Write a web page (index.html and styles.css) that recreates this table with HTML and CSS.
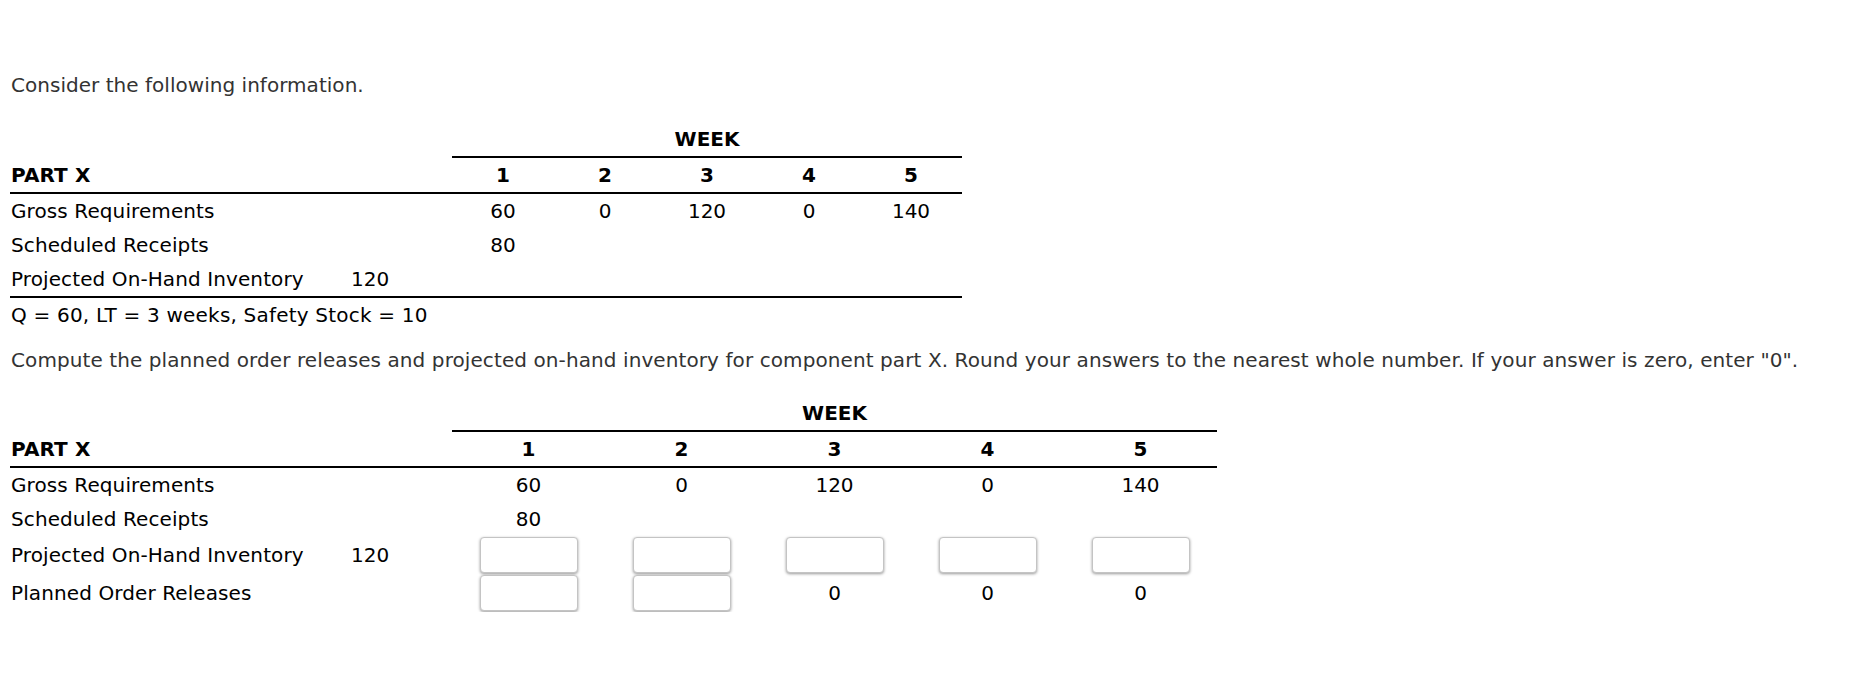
FILE: index.html
```html
<!DOCTYPE html>
<html>
<head>
<meta charset="utf-8">
<link rel="stylesheet" href="styles.css">
</head>
<body>
<div class="page">
  <p class="text intro">Consider the following information.</p>

  <table class="mrp mrp-small">
    <colgroup><col class="c-label"><col class="c-init"><col class="c-wk"><col class="c-wk"><col class="c-wk"><col class="c-wk"><col class="c-wk"></colgroup>
    <tr class="r-week"><td></td><td></td><td colspan="5" class="week">WEEK</td></tr>
    <tr class="r-head"><td class="lbl b">PART X</td><td></td><td class="b num">1</td><td class="b num">2</td><td class="b num">3</td><td class="b num">4</td><td class="b num">5</td></tr>
    <tr class="r-body"><td class="lbl">Gross Requirements</td><td></td><td class="num">60</td><td class="num">0</td><td class="num">120</td><td class="num">0</td><td class="num">140</td></tr>
    <tr class="r-body"><td class="lbl">Scheduled Receipts</td><td></td><td class="num">80</td><td></td><td></td><td></td><td></td></tr>
    <tr class="r-body r-last"><td class="lbl">Projected On-Hand Inventory</td><td class="init">120</td><td></td><td></td><td></td><td></td><td></td></tr>
    <tr class="r-body"><td class="lbl note" colspan="7">Q = 60, LT = 3 weeks, Safety Stock = 10</td></tr>
  </table>

  <p class="text compute">Compute the planned order releases and projected on-hand inventory for component part X. Round your answers to the nearest whole number. If your answer is zero, enter "0".</p>

  <table class="mrp mrp-large">
    <colgroup><col class="c-label"><col class="c-init"><col class="c-wk2"><col class="c-wk2"><col class="c-wk2"><col class="c-wk2"><col class="c-wk2"></colgroup>
    <tr class="r-week"><td></td><td></td><td colspan="5" class="week">WEEK</td></tr>
    <tr class="r-head"><td class="lbl b">PART X</td><td></td><td class="b num">1</td><td class="b num">2</td><td class="b num">3</td><td class="b num">4</td><td class="b num">5</td></tr>
    <tr class="r-body"><td class="lbl">Gross Requirements</td><td></td><td class="num">60</td><td class="num">0</td><td class="num">120</td><td class="num">0</td><td class="num">140</td></tr>
    <tr class="r-body"><td class="lbl">Scheduled Receipts</td><td></td><td class="num">80</td><td></td><td></td><td></td><td></td></tr>
    <tr class="r-input"><td class="lbl">Projected On-Hand Inventory</td><td class="init">120</td><td class="num"><input class="ans" type="text"></td><td class="num"><input class="ans" type="text"></td><td class="num"><input class="ans" type="text"></td><td class="num"><input class="ans" type="text"></td><td class="num"><input class="ans" type="text"></td></tr>
    <tr class="r-input"><td class="lbl">Planned Order Releases</td><td></td><td class="num"><input class="ans" type="text"></td><td class="num"><input class="ans" type="text"></td><td class="num">0</td><td class="num">0</td><td class="num">0</td></tr>
  </table>
</div>
</body>
</html>
```

FILE: styles.css
```css
html, body {
  margin: 0;
  padding: 0;
  background: #fff;
}

.page {
  padding: 68px 8px 0 10px;
  font-family: "DejaVu Sans", Verdana, sans-serif;
  font-size: 20px;
  color: #000;
}

.text {
  margin: 0;
  padding-left: 1px;
  line-height: 34px;
  color: #333;
  letter-spacing: 0.09px;
  white-space: nowrap;
}

.intro {
  letter-spacing: 0.03px;
}

.compute {
  margin-top: 11px;
}

.mrp {
  border-collapse: separate;
  border-spacing: 0;
  table-layout: fixed;
  font-size: 20px;
  line-height: 24px;
  color: #000;
}

.mrp-small {
  width: 952px;
  margin-top: 20px;
}

.mrp-large {
  width: 1207px;
  margin-top: 19px;
}

.c-label { width: 333px; }
.c-init { width: 109px; }
.c-wk { width: 102px; }
.c-wk2 { width: 153px; }

.mrp td {
  padding: 0;
  vertical-align: middle;
  white-space: nowrap;
}

.lbl {
  text-align: left;
  padding-left: 1px !important;
  letter-spacing: 0.1px;
}

.note {
  letter-spacing: 0.2px;
}

.init {
  text-align: left;
  padding-left: 8px !important;
}

.num {
  text-align: center;
}

.b {
  font-weight: bold;
}

.r-week td {
  height: 34px;
}

.week {
  font-weight: bold;
  text-align: center;
  border-bottom: 2px solid #000;
}

.r-head td {
  height: 34px;
  border-bottom: 2px solid #000;
}

.r-body td {
  height: 34px;
}

.r-last td {
  border-bottom: 2px solid #000;
}

.r-input td {
  height: 38px;
}

.ans {
  box-sizing: border-box;
  display: block;
  margin: 0 auto;
  width: 98px;
  height: 36px;
  border: 1px solid #c4c4c4;
  border-radius: 4px;
  background: #fff;
  box-shadow: 0 1px 3px rgba(0, 0, 0, 0.4);
  padding: 0 6px;
  font: inherit;
}
```
